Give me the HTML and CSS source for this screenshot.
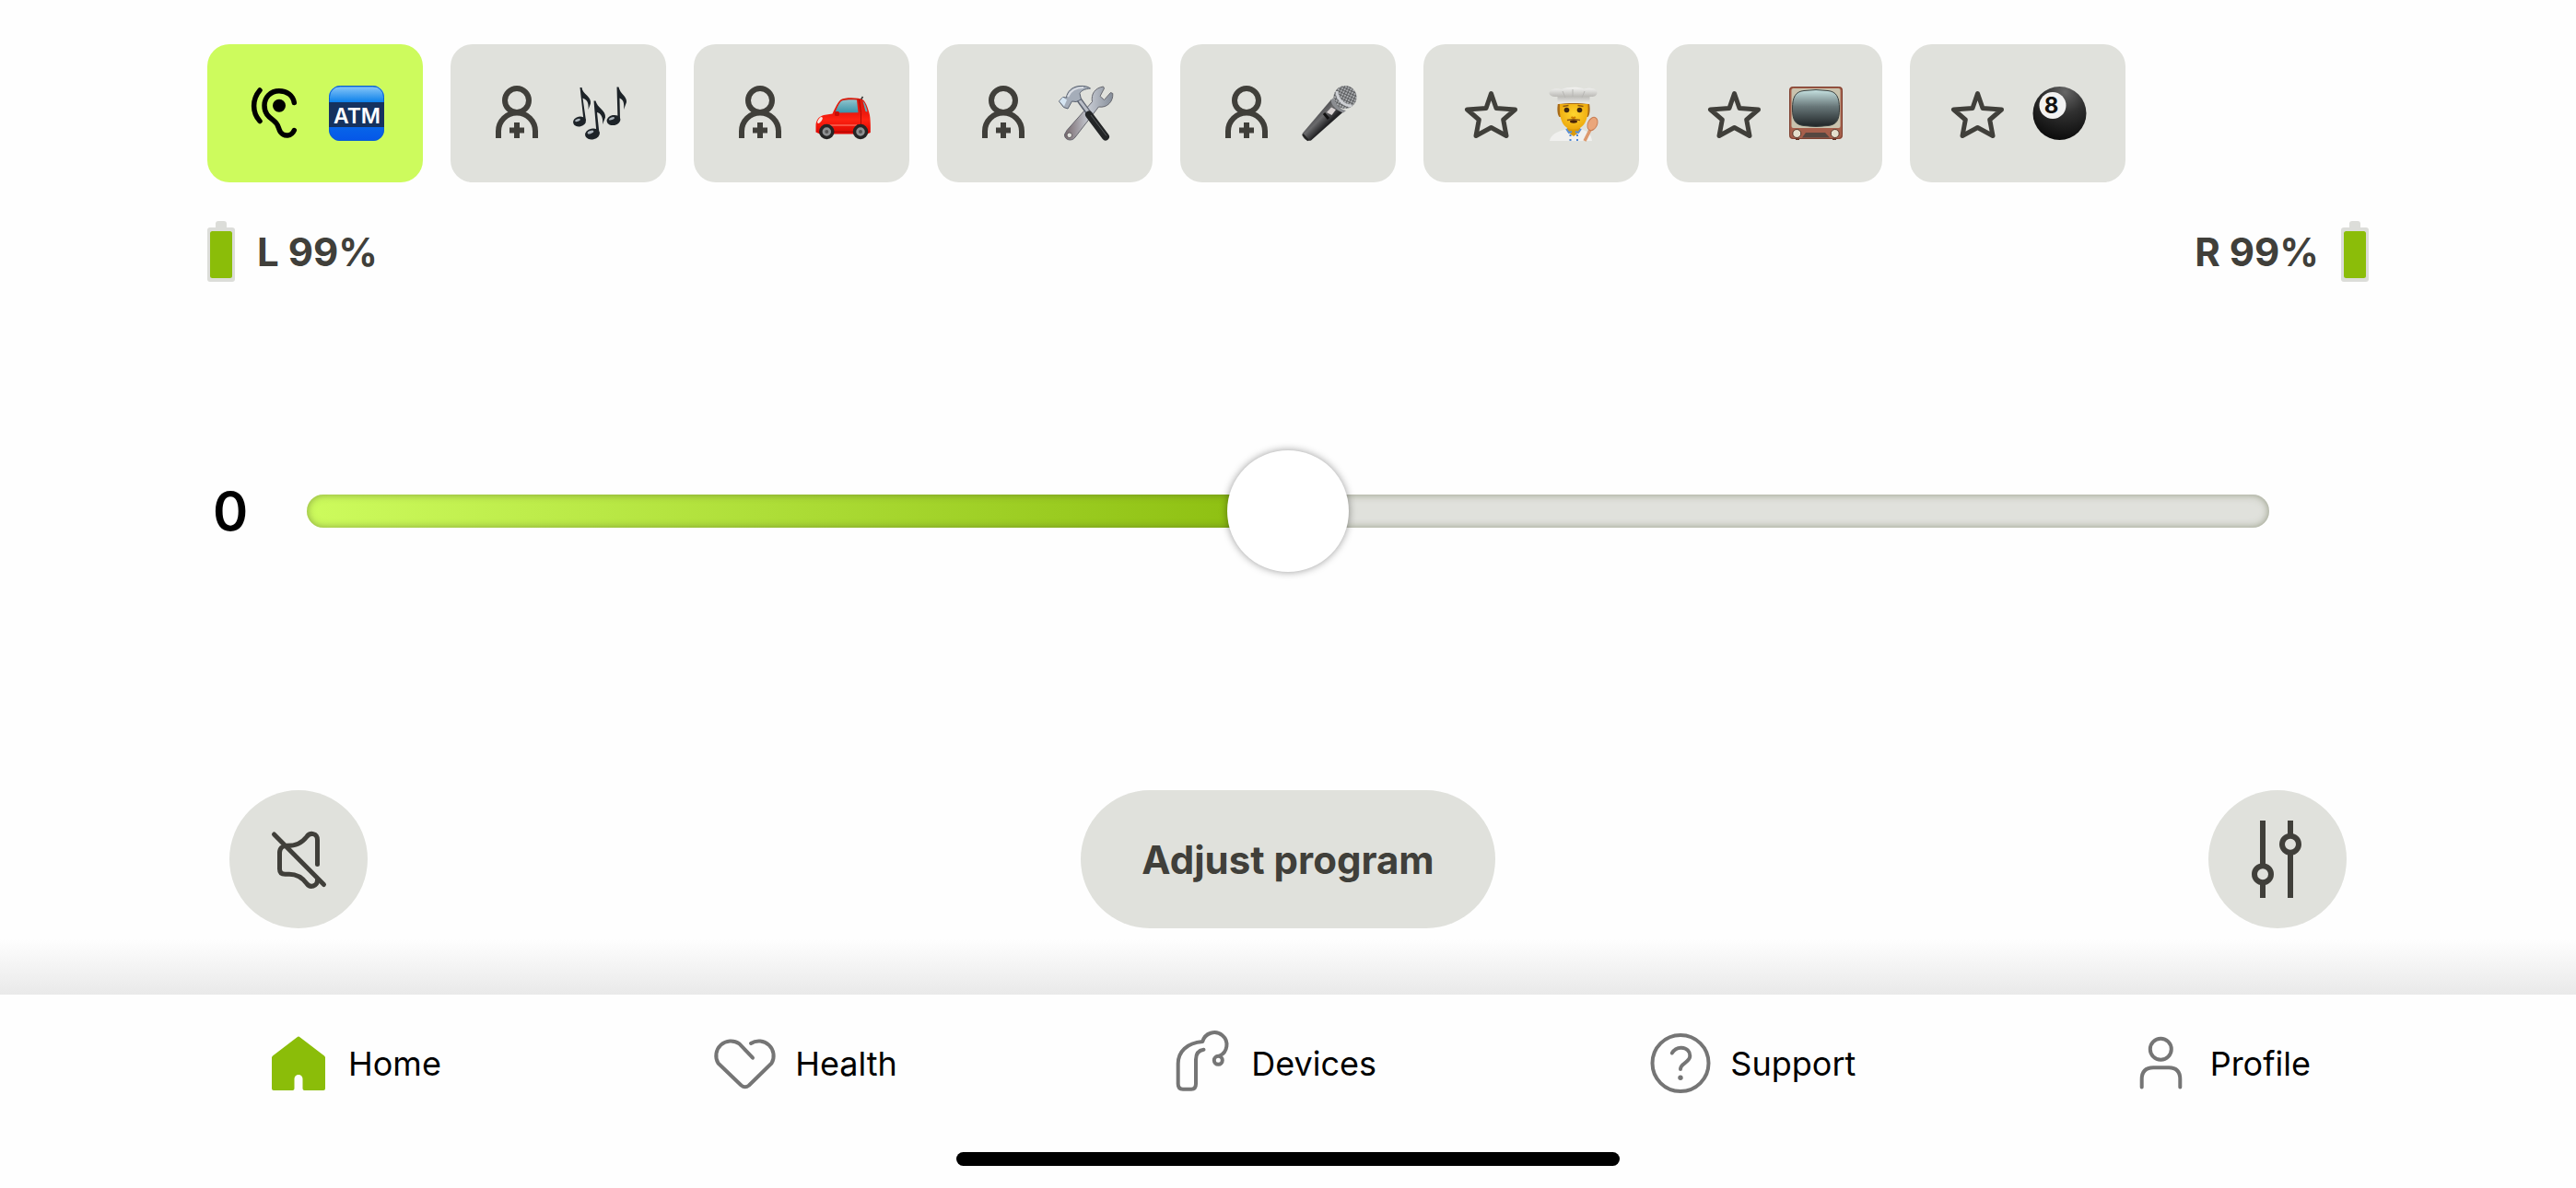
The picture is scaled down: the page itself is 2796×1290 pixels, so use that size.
FILE: index.html
```html
<!DOCTYPE html>
<html lang="en">
<head>
    <meta charset="UTF-8">
    <meta name="viewport" content="width=device-width, initial-scale=1.0">
    <title>Home</title>
    <link rel="stylesheet" href="styles.css">
</head>
<body>
    <!-- Shared icons -->
    <svg class="sprite" aria-hidden="true">
        <symbol id="person" viewBox="0 0 60 60">
            <g fill="none" stroke="currentColor" stroke-width="6">
                <circle cx="30" cy="16" r="13"/>
                <path d="M10 57V49.5a20 20 0 0 1 40 0V57M30 40v17M22 48.500h16"/>
            </g>
        </symbol>
        <symbol id="star" viewBox="0 0 60 60">
            <path d="M31.500 8.500L37 24.500L57.500 26L44.700 37L48 54.500L31.500 45.500L15 54.500L18.300 37L5.500 26L26 24.500Z" fill="none" stroke="currentColor" stroke-width="5" stroke-linejoin="round"/>
        </symbol>
        <symbol id="battery" viewBox="0 0 30 66">
            <path d="M9 7V3a3 3 0 0 1 3-3h6a3 3 0 0 1 3 3v4h6a3 3 0 0 1 3 3v53a3 3 0 0 1-3 3H3a3 3 0 0 1-3-3V10a3 3 0 0 1 3-3z" fill="#dcddd9"/>
            <rect x="3" y="11" width="24" height="51" rx="2.500" fill="#8bbd09"/>
        </symbol>
    </svg>

    <main class="content">
        <div class="programs">
            <button type="button" class="program active" aria-label="ATM">
                <svg class="icon" viewBox="0 0 60 60" fill="none" stroke="currentColor" stroke-width="5.500" stroke-linecap="round" stroke-linejoin="round">
                    <path d="M15 5C6.500 15 6.500 29 15 38.500"/>
                    <path d="M52.300 18.500C51 10.500 44.500 5.700 36 5.700C26.500 5.700 20 12.800 20 21.500C20 30 24.500 34 29.500 37.500C36 42 34.500 46 37.500 50.500C41.500 56 49.500 55 52.300 48.500"/>
                    <circle cx="36" cy="21.700" r="7" fill="currentColor" stroke="none"/>
                </svg>
                <svg class="icon" viewBox="0 0 60 60">
                    <defs>
                        <linearGradient id="atmTop" x1="0" y1="0" x2="0" y2="1">
                            <stop offset="0" stop-color="#0a6cd0"/>
                            <stop offset=".04" stop-color="#7cc0f7"/>
                            <stop offset=".3" stop-color="#0b80ea"/>
                            <stop offset="1" stop-color="#0556e8"/>
                        </linearGradient>
                    </defs>
                    <rect width="60" height="60" rx="12" fill="url(#atmTop)"/>
                    <rect x=".5" y=".5" width="59" height="59" rx="12" fill="none" stroke="#0a5fd0"/>
                    <path d="M0 18h60v27H0z" fill="#15325f"/>
                    <text class="atm-text" x="30.500" y="40.500">ATM</text>
                </svg>
            </button>
            <button type="button" class="program" aria-label="Music">
                <svg class="icon"><use href="#person"/></svg>
                <svg class="icon" viewBox="0 0 60 60">
                    <g fill="#1d2328">
                        <ellipse cx="8" cy="39" rx="7" ry="5.300" transform="rotate(-12 8 39)"/>
                        <path d="M8.500 2h2C11 9 21.500 12 20 19.500L17.500 26C18.500 18 15.500 15 11.500 13.500L15 38h-2.500z"/>
                        <ellipse cx="22" cy="52.500" rx="8" ry="6" transform="rotate(-12 22 52.500)"/>
                        <path d="M23.500 16.500h2C27 24 37 27 36 34.500L33 42C34 34 31 30 27 29L29.500 52h-3z"/>
                        <ellipse cx="45" cy="37.500" rx="7.500" ry="5.500" transform="rotate(-12 45 37.500)"/>
                        <path d="M48.500 1.500h2C52 9 60 12 59 18L56 26C57 18 55 15 51.500 13.500L52 37h-2.500z"/>
                    </g>
                    <g fill="#aab3bb">
                        <ellipse cx="6" cy="37.500" rx="3" ry="1.400" transform="rotate(-20 6 37.500)"/>
                        <ellipse cx="20" cy="50.500" rx="3.500" ry="1.600" transform="rotate(-20 20 50.500)"/>
                        <ellipse cx="43" cy="35.800" rx="3.200" ry="1.400" transform="rotate(-20 43 35.800)"/>
                    </g>
                </svg>
            </button>
            <button type="button" class="program" aria-label="Car">
                <svg class="icon"><use href="#person"/></svg>
                <svg class="icon" viewBox="0 0 60 60">
                    <defs>
                        <linearGradient id="carBody" x1="0" y1="0" x2="0" y2="1">
                            <stop offset="0" stop-color="#d41a0c"/>
                            <stop offset=".45" stop-color="#f01a0e"/>
                            <stop offset=".6" stop-color="#ff2312"/>
                            <stop offset="1" stop-color="#dc0500"/>
                        </linearGradient>
                        <linearGradient id="carGlass" x1="0" y1="0" x2="0" y2="1">
                            <stop offset="0" stop-color="#8fc3cc"/>
                            <stop offset="1" stop-color="#3a93a8"/>
                        </linearGradient>
                    </defs>
                    <path d="M49 16l2.500-4" stroke="#333" stroke-width="1.500"/>
                    <path d="M.500 44C.300 38 3.500 33.500 9 32L18.500 30.500C21.500 24 24.500 17.500 28 15C32 12.500 47 12.500 52 15.500C55.500 19 57.500 26 58.500 30C60 35 60 45 59.800 51L56 52.500H5L.500 50.500z" fill="url(#carBody)"/>
                    <path d="M21.500 29.500C23.500 23 26.500 17 30 16C34 15 40 15 45 15.500L46.500 29.200z" fill="url(#carGlass)"/>
                    <path d="M51.500 16.500C54.500 20 56 25 56.500 28.500L54.500 28z" fill="#66a9b8"/>
                    <path d="M47.500 15l2 14.500v15L44 50H20" fill="none" stroke="#a70a05"/>
                    <path d="M10 43h35" stroke="#ff8a78"/>
                    <rect x="21" y="28" width="5" height="5" rx="1.500" fill="#c90d05"/>
                    <ellipse cx="5" cy="37.500" rx="1.800" ry="4" fill="#f8e3df" transform="rotate(35 5 37.500)"/>
                    <g fill="#8e9092" stroke="#252525" stroke-width="3.500">
                        <circle cx="12.300" cy="50" r="6.500"/>
                        <circle cx="49" cy="50" r="6.500"/>
                    </g>
                    <circle cx="12.300" cy="50" r="2" fill="#555"/>
                    <circle cx="49" cy="50" r="2" fill="#555"/>
                </svg>
            </button>
            <button type="button" class="program" aria-label="Tools">
                <svg class="icon"><use href="#person"/></svg>
                <svg class="icon" viewBox="0 0 60 60">
                    <defs>
                        <linearGradient id="steel" x1="0" y1="0" x2="1" y2="0">
                            <stop offset="0" stop-color="#75666b"/>
                            <stop offset=".5" stop-color="#c5c9d1"/>
                            <stop offset="1" stop-color="#858d99"/>
                        </linearGradient>
                    </defs>
                    <path d="M9 48.500L36.500 17.500C35 9 39.500 2.500 48.500 1L49.500 3L45 11.500L49.500 15.500L56.500 7.500L58.800 8.500C59.500 17 53 24.500 43.500 23L18 56C15 61 6 59.500 6.500 53z" fill="url(#steel)" stroke="#67686f"/>
                    <circle cx="11.800" cy="53.800" r="2.800" fill="#e0e1dc" stroke="#655f63"/>
                    <path d="M22 15L35 33" stroke="#5d6370" stroke-width="6"/>
                    <path d="M22 15L34 31" stroke="#b9bdc6" stroke-width="3"/>
                    <path d="M33 31.500L51 55.500" stroke="#232526" stroke-width="8" stroke-linecap="round"/>
                    <path d="M35 32L52 54.500" stroke="#55595a"/>
                    <path d="M.500 17L4.500 12.500L8.500 13C9 7 14 1.500 22 .500C28 0 32 1 34.500 3C29 3.500 24.500 5 23 8.500L24.500 15L19 17.500L14.500 17L10 25L5.500 23.500z" fill="#a5adb9" stroke="#5a6270"/>
                    <path d="M1 17L4.500 12.500L9 15.500L6 22.500z" fill="#d5e5f2"/>
                    <path d="M10 12C13 5 19 2 27 2" stroke="#dadee4" stroke-width="2" fill="none"/>
                </svg>
            </button>
            <button type="button" class="program" aria-label="Microphone">
                <svg class="icon"><use href="#person"/></svg>
                <svg class="icon" viewBox="0 0 60 60">
                    <defs>
                        <linearGradient id="micBody" x1="0" y1="0" x2="1" y2="1">
                            <stop offset=".25" stop-color="#37373a"/>
                            <stop offset=".45" stop-color="#6a6a6c"/>
                            <stop offset=".6" stop-color="#222224"/>
                        </linearGradient>
                        <pattern id="mesh" width="3" height="3" patternUnits="userSpaceOnUse" patternTransform="rotate(25)">
                            <rect width="3" height="3" fill="#a9abae"/>
                            <path d="M0 0h3M0 0v3" stroke="#4c4e50" stroke-width="1.500"/>
                        </pattern>
                    </defs>
                    <path d="M.500 52L32 15L45.500 28L10 59.500C6 61 0 57 .500 52z" fill="url(#micBody)"/>
                    <path d="M1 53L7 59.500" stroke="#222" stroke-width="2"/>
                    <circle cx="47" cy="12.500" r="12.500" fill="url(#mesh)"/>
                    <path d="M34.500 13C35 19 41 26 48 27L45 29.500C38 27.500 32 21.500 31.500 15.500z" fill="#8b8d91"/>
                    <path d="M38 6C38 14 45 22 54 22" fill="none" stroke="#ced0d4" stroke-width="3"/>
                    <path d="M27 29L32 23.500L37 26L32.500 32z" fill="#d9d3d3"/>
                    <path d="M24 30l5 6" stroke="#111" stroke-width="3"/>
                </svg>
            </button>
            <button type="button" class="program" aria-label="Cooking">
                <svg class="icon"><use href="#star"/></svg>
                <svg class="icon" viewBox="0 0 60 60">
                    <defs>
                        <linearGradient id="hat" x1="0" y1="0" x2="0" y2="1">
                            <stop offset="0" stop-color="#f5f5f3"/>
                            <stop offset=".55" stop-color="#bdbcb8"/>
                            <stop offset="1" stop-color="#efefed"/>
                        </linearGradient>
                        <radialGradient id="skin" cx=".5" cy=".4" r=".6">
                            <stop offset="0" stop-color="#ffd52f"/>
                            <stop offset="1" stop-color="#eda80c"/>
                        </radialGradient>
                    </defs>
                    <path d="M5 60C6 53 13 50 22 47.500H40C47 50 50 53 51 60z" fill="#f0f0ee"/>
                    <path d="M24 46h14v4l-7 5l-7-5z" fill="#dc9b0a"/>
                    <path d="M23 47l3 4l3-1M39 47l-3 4l-3-1" fill="none" stroke="#5b91d8" stroke-width="2"/>
                    <path d="M27.500 53v7M35 53v7" stroke="#4d86d4" stroke-width="2" stroke-dasharray="2 3"/>
                    <path d="M14 19C13 25 13 31 15.500 34H46.500C49 31 49 25 48 19z" fill="#a86b18"/>
                    <path d="M16 20H46.500C47.500 36 43 47.500 31 47.500S15 36 16 20z" fill="url(#skin)"/>
                    <path d="M13.500 20V12C8 12.500 3 10 5 6.500C7 3 13 2.500 18 4C24 1 37 1 42 3.500C48 2 56 3 56.500 7.500C56.500 11 53 12.500 48.500 12V20C39 18.500 23 18.500 13.500 20z" fill="url(#hat)"/>
                    <path d="M19 6l3 7M30 4v8M43 6l-3 7" stroke="#b8b7b4" fill="none"/>
                    <circle cx="23.500" cy="26.500" r="2.800" fill="#402810"/>
                    <circle cx="37.500" cy="26.500" r="2.800" fill="#402810"/>
                    <path d="M19.500 22.500l6-1M35.500 21.500l6 1" stroke="#8d5811" stroke-width="1.500"/>
                    <path d="M28.500 34q2.500 2 4.500 0" stroke="#d07d00" stroke-width="1.800" fill="none"/>
                    <path d="M24 37.500q7-1.500 14 0" stroke="#8b5717" stroke-width="1.500" fill="none"/>
                    <ellipse cx="31" cy="39" rx="4" ry="1.700" fill="#492207"/>
                    <path d="M50 46L43 60" stroke="#dc996e" stroke-width="3.500"/>
                    <ellipse cx="51.500" cy="41.500" rx="5" ry="7.500" fill="#eaa67b" stroke="#c87c52" transform="rotate(25 51.500 41.500)"/>
                </svg>
            </button>
            <button type="button" class="program" aria-label="TV">
                <svg class="icon"><use href="#star"/></svg>
                <svg class="icon" viewBox="0 0 60 60">
                    <defs>
                        <linearGradient id="screen" x1="0" y1="0" x2="0" y2="1">
                            <stop offset="0" stop-color="#c7e3e2"/>
                            <stop offset=".45" stop-color="#69787a"/>
                            <stop offset="1" stop-color="#1f2426"/>
                        </linearGradient>
                    </defs>
                    <path d="M8 56h4v3H8zM48 56h4v3h-4z" fill="#5d2f22"/>
                    <rect x="1" y="1" width="58" height="57" rx="4" fill="#a65f4b"/>
                    <rect x="1.500" y="1.500" width="57" height="56" rx="4" fill="none" stroke="#7d4030"/>
                    <rect x="3.500" y="3" width="53" height="43" rx="2" fill="#c9c3ae"/>
                    <path d="M17 5.500Q30 3.500 43 5.500C52 6.500 55.500 12 55.500 25S52 42.500 43 43.500Q30 45.500 17 43.500C8 42.500 4.500 38 4.500 25S8 6.500 17 5.500z" fill="url(#screen)" stroke="#39403f"/>
                    <path d="M19 51h21l5 5.500H15z" fill="#564740"/>
                    <circle cx="9.300" cy="52" r="4.500" fill="#e4decc" stroke="#563426"/>
                    <circle cx="50.700" cy="52" r="4.500" fill="#e4decc" stroke="#563426"/>
                </svg>
            </button>
            <button type="button" class="program" aria-label="Billiards">
                <svg class="icon"><use href="#star"/></svg>
                <svg class="icon" viewBox="0 0 60 60">
                    <defs>
                        <radialGradient id="ball" cx=".6" cy=".1" r=".9">
                            <stop offset="0" stop-color="#666"/>
                            <stop offset=".45" stop-color="#303030"/>
                            <stop offset="1" stop-color="#0c0c0c"/>
                        </radialGradient>
                    </defs>
                    <circle cx="30.500" cy="30" r="29" fill="url(#ball)"/>
                    <circle cx="23" cy="21.500" r="14.500" fill="#f2f2f2"/>
                    <text class="ball-text" x="21.500" y="29.500">8</text>
                </svg>
            </button>
        </div>

        <div class="batteries">
            <div class="battery">
                <svg class="battery-icon"><use href="#battery"/></svg>
                <span>L 99%</span>
            </div>
            <div class="battery">
                <span>R 99%</span>
                <svg class="battery-icon"><use href="#battery"/></svg>
            </div>
        </div>

        <div class="volume">
            <label for="volume" class="volume-value">0</label>
            <input type="range" id="volume" class="volume-slider" min="-10" max="10" value="0">
        </div>

        <div class="actions">
            <button type="button" class="round-button" aria-label="Mute">
                <svg class="icon" viewBox="0 0 60 60" fill="none" stroke="currentColor" stroke-width="5" stroke-linecap="round">
                    <path d="M50.500 35.500V9C50.500 1.500 42.500 .500 39 5.500C33 13 27 15.300 17.500 15.300C12.500 15.300 9.500 18 9.500 23V40.500C9.500 44.500 11.500 46.300 15.500 46.300H20C28 46.300 34.500 50.500 39 56.500C42.500 61.500 50.500 59.500 50.500 52.500"/>
                    <path d="M3.500 3L57.500 57.500"/>
                </svg>
            </button>
            <button type="button" class="adjust-button">Adjust program</button>
            <button type="button" class="round-button" aria-label="Equalizer">
                <svg class="icon-large" viewBox="0 0 90 90" fill="none" stroke="currentColor" stroke-width="6">
                    <path d="M29 3v49M29 70v17M59 3v17M59 38v49"/>
                    <circle cx="29" cy="61.300" r="9"/>
                    <circle cx="59" cy="28.700" r="9"/>
                </svg>
            </button>
        </div>
        <div class="fade"></div>
    </main>

    <!-- Bottom tab bar -->
    <footer class="tabbar">
        <nav class="tabs">
            <a href="#" class="tab">
                <svg class="tab-icon home" viewBox="0 0 72 72">
                    <path d="M34.500 7.200Q36 6 37.500 7.200L64 27.500Q65 28.300 65 29.500V63Q65 65 63 65H42.500Q40.500 65 40.500 63V52.500a4.500 4.500 0 0 0-9 0V63Q31.500 65 29.500 65H9Q7 65 7 63V29.500Q7 28.300 8 27.500z"/>
                </svg>
                Home
            </a>
            <a href="#" class="tab">
                <svg class="tab-icon" viewBox="0 0 72 72">
                    <path d="M44 29.700L29.500 14.300A16 16 0 0 0 6.500 35.500L31.500 59.500Q35.700 63 40 59.500L64.500 35.500A16 16 0 0 0 42 14"/>
                </svg>
                Health
            </a>
            <a href="#" class="tab">
                <svg class="tab-icon" viewBox="0 0 72 72">
                    <path d="M38.500 20.700C33 21.500 30 25.500 30 31.500V58Q30 63.700 25 63.700H16Q10.700 63.700 10.700 58V36C10.700 23 20 13.500 37.300 12A13.300 13.300 0 1 1 55.700 27.500"/>
                    <circle cx="54.300" cy="32.300" r="4.500"/>
                </svg>
                Devices
            </a>
            <a href="#" class="tab">
                <svg class="tab-icon" viewBox="0 0 72 72">
                    <circle cx="36" cy="35.500" r="30.500"/>
                    <path d="M26.800 24.500C29.500 20 33 18.500 37 18.700C43 19 46.300 23 46.300 27.500C46.300 35 36 35 36 42"/>
                    <circle cx="36" cy="51.300" r="2.700" fill="#757575" stroke="none"/>
                </svg>
                Support
            </a>
            <a href="#" class="tab">
                <svg class="tab-icon" viewBox="0 0 72 72">
                    <circle cx="36.300" cy="20.300" r="11.500"/>
                    <path d="M15.700 61.500V53Q15.700 40.200 28.300 40.200H45Q57.300 40.200 57.300 53V61.500"/>
                </svg>
                Profile
            </a>
        </nav>
        <div class="home-indicator"></div>
    </footer>
</body>
</html>
```
FILE: styles.css
```css
* {
    box-sizing: border-box;
}

body {
    margin: 0;
    min-height: 100vh;
    display: flex;
    flex-direction: column;
    font-family: Inter, "Liberation Sans", sans-serif;
    background-color: #fefefe;
    color: #403f3a;
}

button {
    border: none;
    padding: 0;
    font-family: inherit;
    color: inherit;
    background-color: #e0e1dc;
    cursor: pointer;
}

svg {
    display: block;
    flex-shrink: 0;
    overflow: visible;
}

.sprite {
    position: absolute;
    width: 0;
    height: 0;
}

.content {
    flex: 1;
    display: flex;
    flex-direction: column;
}

/* Program cards */
.programs {
    display: flex;
    gap: 30px;
    padding: 48px 225px 0;
}

.program {
    display: flex;
    align-items: center;
    justify-content: center;
    gap: 30px;
    width: 234px;
    height: 150px;
    border-radius: 24px;
}

.program.active {
    background-color: #cdfb5d;
    color: #000;
}

.icon {
    width: 60px;
    height: 60px;
}

.icon-large {
    width: 90px;
    height: 90px;
}

.atm-text {
    font-size: 23px;
    font-weight: 600;
    fill: #fff;
    text-anchor: middle;
}

.ball-text {
    font-size: 24px;
    font-weight: 700;
    fill: #111;
    text-anchor: middle;
}

/* Battery status */
.batteries {
    display: flex;
    justify-content: space-between;
    padding: 42px 225px 0;
}

.battery {
    display: flex;
    align-items: center;
    gap: 24px;
    font-size: 42px;
    font-weight: 700;
}

.battery-icon {
    width: 30px;
    height: 66px;
}

/* Volume */
.volume {
    flex: 1;
    display: grid;
    grid-template-columns: 108px 1fr;
    align-items: center;
    padding: 0 333px 54px 225px;
}

.volume-value {
    padding-left: 6px;
    font-size: 58px;
    font-weight: 600;
    color: #000;
}

.volume-slider {
    -webkit-appearance: none;
    appearance: none;
    width: 100%;
    height: 132px;
    margin: 0;
    background: transparent;
}

.volume-slider::-webkit-slider-runnable-track {
    height: 36px;
    border-radius: 18px;
    background: linear-gradient(to right, #cdfb5d, #8bbd0e 50%, #e0e1dc 50%);
    box-shadow: inset 0 0 8px rgba(70, 80, 40, 0.5);
}

.volume-slider::-webkit-slider-thumb {
    -webkit-appearance: none;
    width: 132px;
    height: 132px;
    margin-top: -48px;
    border-radius: 50%;
    background: #fff;
    box-shadow: 0 0 8px rgba(0, 0, 0, 0.4);
}

/* Action buttons */
.actions {
    display: flex;
    justify-content: space-between;
    padding: 0 249px 12px;
}

.round-button {
    display: flex;
    align-items: center;
    justify-content: center;
    width: 150px;
    height: 150px;
    border-radius: 50%;
}

.adjust-button {
    width: 450px;
    height: 150px;
    border-radius: 75px;
    font-size: 42px;
    font-weight: 700;
}

.fade {
    height: 60px;
    background: linear-gradient(#fefefe, #e9e9e9);
}

/* Tab bar */
.tabbar {
    padding: 39px 0 24px;
}

.tabs {
    display: flex;
    justify-content: space-between;
    padding: 0 288px;
    margin-bottom: 60px;
}

.tab {
    display: flex;
    align-items: center;
    gap: 18px;
    font-size: 36px;
    line-height: 72px;
    color: #000;
    text-decoration: none;
}

.tab-icon {
    width: 72px;
    height: 72px;
    fill: none;
    stroke: #757575;
    stroke-width: 4;
    stroke-linecap: round;
    stroke-linejoin: round;
}

.tab-icon.home {
    fill: #8bbd09;
    stroke: none;
}

.home-indicator {
    width: 720px;
    height: 15px;
    margin: 0 auto;
    border-radius: 8px;
    background-color: #000;
}
```
